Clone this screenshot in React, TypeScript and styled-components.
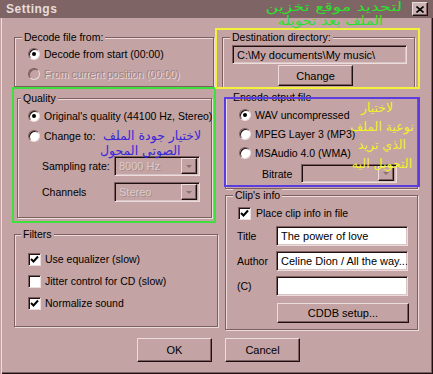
import React from 'react';
import styled, { createGlobalStyle } from 'styled-components';

const BG = '#c3a3a3';
const DARK = '#7d5f5f';
const BLACK = '#1e1010';
const LIGHT = '#ecdcdc';

const Global = createGlobalStyle`
  html, body { margin: 0; padding: 0; background: ${BG}; }
  body { font-family: "Liberation Sans", Arial, sans-serif; }
`;

const Window = styled.div`
  position: relative;
  width: 433px;
  height: 374px;
  box-sizing: border-box;
  background: ${BG};
  display: flex;
  flex-direction: column;
  font-size: 10.5px;
  color: #000;
  overflow: hidden;
  box-shadow: inset 1px 0 0 ${BG}, inset 2px 0 0 ${LIGHT}, inset -1px -1px 0 ${BLACK}, inset -2px -2px 0 ${DARK};
`;

const TitleBar = styled.div`
  height: 18px;
  flex: none;
  background: #7e6464;
  display: flex;
  align-items: center;
  justify-content: space-between;
  padding: 0 5px 0 6px;
`;

const Title = styled.span`
  font-weight: bold;
  font-size: 12px;
  letter-spacing: 0.5px;
  color: #e9dddd;
`;

const CloseBtn = styled.div`
  width: 16px;
  height: 14px;
  box-sizing: border-box;
  background: #cbb3b3;
  border: 1px solid;
  border-color: ${LIGHT} ${BLACK} ${BLACK} ${LIGHT};
  box-shadow: inset -1px -1px 0 ${DARK};
  display: flex;
  align-items: center;
  justify-content: center;
`;

const Body = styled.div`
  display: flex;
  align-items: flex-start;
  padding-top: 13px;
`;

const Column = styled.div<{ $ml: number; $w: number }>`
  margin-left: ${(p) => p.$ml}px;
  width: ${(p) => p.$w}px;
  display: flex;
  flex-direction: column;
`;

const Group = styled.fieldset<{ $w: number; $ml?: number; $mt?: number }>`
  position: relative;
  margin: ${(p) => p.$mt ?? 0}px 0 0 ${(p) => p.$ml ?? 0}px;
  width: ${(p) => p.$w}px;
  min-width: 0;
  box-sizing: border-box;
  padding: 0;
  border: 1px solid ${DARK};
  box-shadow: 1px 1px 0 ${LIGHT}, inset 1px 1px 0 ${LIGHT};
`;

const Legend = styled.legend<{ $ml?: number }>`
  margin-left: ${(p) => p.$ml ?? 7}px;
  padding: 0 2px;
  line-height: 12px;
  font-size: 10.5px;
  background: ${BG};
`;

const GroupBody = styled.div<{ $pt: number; $pb: number; $pl: number; $gap: number }>`
  display: flex;
  flex-direction: column;
  align-items: flex-start;
  gap: ${(p) => p.$gap}px;
  padding: ${(p) => p.$pt}px 0 ${(p) => p.$pb}px ${(p) => p.$pl}px;
`;

const OptionRow = styled.div<{ $gap?: number; $disabled?: boolean; $mt?: number }>`
  display: flex;
  align-items: center;
  height: 16px;
  gap: ${(p) => p.$gap ?? 4}px;
  margin-top: ${(p) => p.$mt ?? 0}px;
  white-space: nowrap;
  color: ${(p) => (p.$disabled ? '#9c8282' : '#000')};
  text-shadow: ${(p) => (p.$disabled ? `1px 1px 0 ${LIGHT}` : 'none')};
`;

const RadioDot = styled.span<{ $checked?: boolean; $disabled?: boolean }>`
  position: relative;
  flex: none;
  width: 12px;
  height: 12px;
  box-sizing: border-box;
  border-radius: 50%;
  border: 1px solid;
  border-color: ${DARK} ${LIGHT} ${LIGHT} ${DARK};
  box-shadow: inset 1px 1px 0 ${(p) => (p.$disabled ? DARK : BLACK)};
  background: ${(p) => (p.$disabled ? BG : '#fff')};
  &::after {
    content: '';
    display: ${(p) => (p.$checked ? 'block' : 'none')};
    position: absolute;
    left: 3px;
    top: 3px;
    width: 4px;
    height: 4px;
    border-radius: 50%;
    background: #000;
  }
`;

const CheckBox = styled.span`
  flex: none;
  width: 13px;
  height: 13px;
  box-sizing: border-box;
  border: 1px solid;
  border-color: ${DARK} ${LIGHT} ${LIGHT} ${DARK};
  box-shadow: inset 1px 1px 0 ${BLACK};
  background: #fff;
  display: flex;
  align-items: center;
  justify-content: center;
`;

const FieldRow = styled.div<{ $mt?: number; $ml?: number }>`
  display: flex;
  align-items: center;
  margin-top: ${(p) => p.$mt ?? 0}px;
  margin-left: ${(p) => p.$ml ?? 0}px;
  white-space: nowrap;
`;

const FieldLabel = styled.span<{ $w: number }>`
  width: ${(p) => p.$w}px;
  flex: none;
`;

const Sunken = styled.div<{ $w: number; $h: number; $white?: boolean; $ml?: number; $mt?: number }>`
  width: ${(p) => p.$w}px;
  height: ${(p) => p.$h}px;
  margin-left: ${(p) => p.$ml ?? 0}px;
  margin-top: ${(p) => p.$mt ?? 0}px;
  flex: none;
  box-sizing: border-box;
  border: 1px solid;
  border-color: ${DARK} ${LIGHT} ${LIGHT} ${DARK};
  box-shadow: inset 1px 1px 0 ${BLACK}, inset -1px -1px 0 #d8c4c4;
  background: ${(p) => (p.$white ? '#fff' : BG)};
  display: flex;
  align-items: center;
  padding: 0 2px 0 4px;
  overflow: hidden;
  white-space: nowrap;
  font-size: 11px;
`;

const SelectText = styled.span<{ $disabled?: boolean }>`
  flex: 1;
  color: ${(p) => (p.$disabled ? '#dccbcb' : '#000')};
  text-shadow: ${(p) => (p.$disabled ? `1px 1px 0 #a88c8c` : 'none')};
`;

const DropBtn = styled.span`
  flex: none;
  width: 16px;
  align-self: stretch;
  margin: 1px 0;
  box-sizing: border-box;
  border: 1px solid;
  border-color: ${LIGHT} ${BLACK} ${BLACK} ${LIGHT};
  box-shadow: inset -1px -1px 0 ${DARK};
  background: ${BG};
  display: flex;
  align-items: center;
  justify-content: center;
  &::after {
    content: '';
    border-left: 3px solid transparent;
    border-right: 3px solid transparent;
    border-top: 3px solid #8e7272;
  }
`;

const Button = styled.div<{ $w: number; $h: number; $ml?: number; $mt?: number }>`
  width: ${(p) => p.$w}px;
  height: ${(p) => p.$h}px;
  margin-left: ${(p) => p.$ml ?? 0}px;
  margin-top: ${(p) => p.$mt ?? 0}px;
  flex: none;
  box-sizing: border-box;
  background: ${BG};
  border: 1px solid;
  border-color: ${LIGHT} ${BLACK} ${BLACK} ${LIGHT};
  box-shadow: inset -1px -1px 0 ${DARK};
  display: flex;
  align-items: center;
  justify-content: center;
  font-size: 11px;
`;

const ButtonRow = styled.div`
  display: flex;
  justify-content: center;
  gap: 13px;
  padding-left: 4px;
  margin-top: 8px;
`;

const Annot = styled.div<{ $c: string; $t: number; $r: number; $b: number; $l: number }>`
  position: relative;
  &::after {
    content: '';
    position: absolute;
    top: ${(p) => p.$t}px;
    right: ${(p) => p.$r}px;
    bottom: ${(p) => p.$b}px;
    left: ${(p) => p.$l}px;
    border: 2px solid ${(p) => p.$c};
    pointer-events: none;
    z-index: 2;
  }
`;

const Note = styled.div<{ $c: string; $top: number; $left: number; $w: number; $lh: number; $align: string; $fs?: number; $bold?: boolean }>`
  position: absolute;
  z-index: 3;
  top: ${(p) => p.$top}px;
  left: ${(p) => p.$left}px;
  width: ${(p) => p.$w}px;
  direction: rtl;
  text-align: ${(p) => p.$align};
  font-family: "DejaVu Sans", sans-serif;
  font-size: ${(p) => p.$fs ?? 12}px;
  font-weight: ${(p) => (p.$bold ? 'bold' : 'normal')};
  line-height: ${(p) => p.$lh}px;
  color: ${(p) => p.$c};
  white-space: nowrap;
`;

const NoteLine = styled.div<{ $mr?: number; $ml?: number; $sx?: number; $origin?: string }>`
  margin-right: ${(p) => p.$mr ?? 0}px;
  margin-left: ${(p) => p.$ml ?? 0}px;
  transform: scaleX(${(p) => p.$sx ?? 1});
  transform-origin: ${(p) => p.$origin ?? 'right'} center;
`;

const Check = () => (
  <svg width="9" height="9" viewBox="0 0 9 9">
    <path d="M1 4 L3.5 6.5 L8 1.5" fill="none" stroke="#000" strokeWidth="2" />
  </svg>
);

const Radio = ({ checked, disabled, label }: { checked?: boolean; disabled?: boolean; label: string }) => (
  <OptionRow $disabled={disabled}>
    <RadioDot $checked={checked} $disabled={disabled} />
    <span>{label}</span>
  </OptionRow>
);

const CheckOpt = ({ checked, label, gap }: { checked?: boolean; label: string; gap?: number }) => (
  <OptionRow $gap={gap}>
    <CheckBox>{checked && <Check />}</CheckBox>
    <span>{label}</span>
  </OptionRow>
);

const Select = ({ w, h, text, disabled }: { w: number; h: number; text: string; disabled?: boolean }) => (
  <Sunken $w={w} $h={h} style={{ paddingRight: 2 }}>
    <SelectText $disabled={disabled}>{text}</SelectText>
    <DropBtn />
  </Sunken>
);

export default function App() {
  return (
    <>
      <Global />
      <Window>
        <TitleBar>
          <Title>Settings</Title>
          <CloseBtn>
            <svg width="8" height="7" viewBox="0 0 8 7">
              <path d="M0.5 0.5 L7.5 6.5 M7.5 0.5 L0.5 6.5" stroke="#000" strokeWidth="1.6" />
            </svg>
          </CloseBtn>
        </TitleBar>
        <Body>
          <Column $ml={14} $w={204}>
            <Group $w={200}>
              <Legend>Decode file from:</Legend>
              <GroupBody $pt={3} $pb={4} $pl={13} $gap={4}>
                <Radio checked label="Decode from start (00:00)" />
                <Radio disabled label="From current position (00:00)" />
              </GroupBody>
            </Group>
            <Annot $c="#3ee03e" $t={-5} $r={-4} $b={-5} $l={-5} style={{ marginTop: 5, marginLeft: 3, width: 195 }}>
              <Group $w={195}>
                <Legend $ml={3}>Quality</Legend>
                <GroupBody $pt={4} $pb={15} $pl={10} $gap={4}>
                  <Radio checked label="Original's quality (44100 Hz, Stereo)" />
                  <Radio label="Change to:" />
                  <FieldRow $mt={8} $ml={14}>
                    <FieldLabel $w={72}>Sampling rate:</FieldLabel>
                    <Select w={86} h={20} text="8000 Hz" disabled />
                  </FieldRow>
                  <FieldRow $mt={2} $ml={14}>
                    <FieldLabel $w={72}>Channels</FieldLabel>
                    <Select w={86} h={20} text="Stereo" disabled />
                  </FieldRow>
                </GroupBody>
              </Group>
            </Annot>
            <Group $w={204} $mt={10}>
              <Legend $ml={6}>Filters</Legend>
              <GroupBody $pt={11} $pb={15} $pl={13} $gap={6}>
                <CheckOpt checked label="Use equalizer (slow)" />
                <CheckOpt label="Jitter control for CD (slow)" />
                <CheckOpt checked label="Normalize sound" />
              </GroupBody>
            </Group>
          </Column>
          <Column $ml={4} $w={196}>
            <Annot $c="#f2f23a" $t={-3} $r={-5} $b={-1} $l={-7} style={{ width: 193 }}>
              <Group $w={193}>
                <Legend>Destination directory:</Legend>
                <GroupBody $pt={2} $pb={1} $pl={9} $gap={1}>
                  <Sunken $w={175} $h={19}>C:\My documents\My music\</Sunken>
                  <Button $w={75} $h={21} $ml={46}>Change</Button>
                </GroupBody>
              </Group>
            </Annot>
            <Annot $c="#5b3ce0" $t={6} $r={-2} $b={2} $l={-1} style={{ marginTop: 3, marginLeft: 3, width: 193 }}>
              <Group $w={193}>
                <Legend $ml={5}>Encode otput file</Legend>
                <GroupBody $pt={4} $pb={5} $pl={13} $gap={3}>
                  <Radio checked label="WAV uncompressed" />
                  <Radio label="MPEG Layer 3 (MP3)" />
                  <Radio label="MSAudio 4.0 (WMA)" />
                  <FieldRow $ml={23}>
                    <FieldLabel $w={39}>Bitrate</FieldLabel>
                    <Select w={96} h={19} text="" />
                  </FieldRow>
                </GroupBody>
              </Group>
            </Annot>
            <Group $w={193} $ml={3}>
              <Legend>Clip's info</Legend>
              <GroupBody $pt={4} $pb={6} $pl={11} $gap={5}>
                <div style={{ marginLeft: 1 }}>
                  <CheckOpt checked label="Place clip info in file" gap={5} />
                </div>
                <FieldRow>
                  <FieldLabel $w={39}>Title</FieldLabel>
                  <Sunken $w={132} $h={20} $white>The power of love</Sunken>
                </FieldRow>
                <FieldRow>
                  <FieldLabel $w={39}>Author</FieldLabel>
                  <Sunken $w={132} $h={20} $white>Celine Dion / All the way...</Sunken>
                </FieldRow>
                <FieldRow>
                  <FieldLabel $w={39}>(C)</FieldLabel>
                  <Sunken $w={132} $h={20} $white />
                </FieldRow>
                <Button $w={132} $h={20} $ml={40} $mt={2}>CDDB setup...</Button>
              </GroupBody>
            </Group>
          </Column>
        </Body>
        <ButtonRow>
          <Button $w={75} $h={24}>OK</Button>
          <Button $w={75} $h={24}>Cancel</Button>
        </ButtonRow>
        <Note $c="#2ee02e" $top={0} $left={296} $w={106} $lh={14} $align="right" $fs={12.5}>
          <NoteLine $sx={1.4}>لتحديد موقع تخزين</NoteLine>
          <NoteLine $mr={19} $sx={1.2}>الملف بعد تحويله</NoteLine>
        </Note>
        <Note $c="#3a28d8" $top={128} $left={103} $w={100} $lh={15} $align="left" $fs={12.5}>
          <NoteLine $origin="left">لاختيار جودة الملف</NoteLine>
          <NoteLine $origin="left" $ml={-3}>الصوتي المحول</NoteLine>
        </Note>
        <Note $c="#f2f228" $top={99} $left={350} $w={64} $lh={18.5} $align="center" $fs={12.5}>
          <NoteLine $ml={-10}>لاختيار</NoteLine>
          <NoteLine>نوعية الملف</NoteLine>
          <NoteLine>الذي تريد</NoteLine>
          <NoteLine>التحويل اليه</NoteLine>
        </Note>
      </Window>
    </>
  );
}
